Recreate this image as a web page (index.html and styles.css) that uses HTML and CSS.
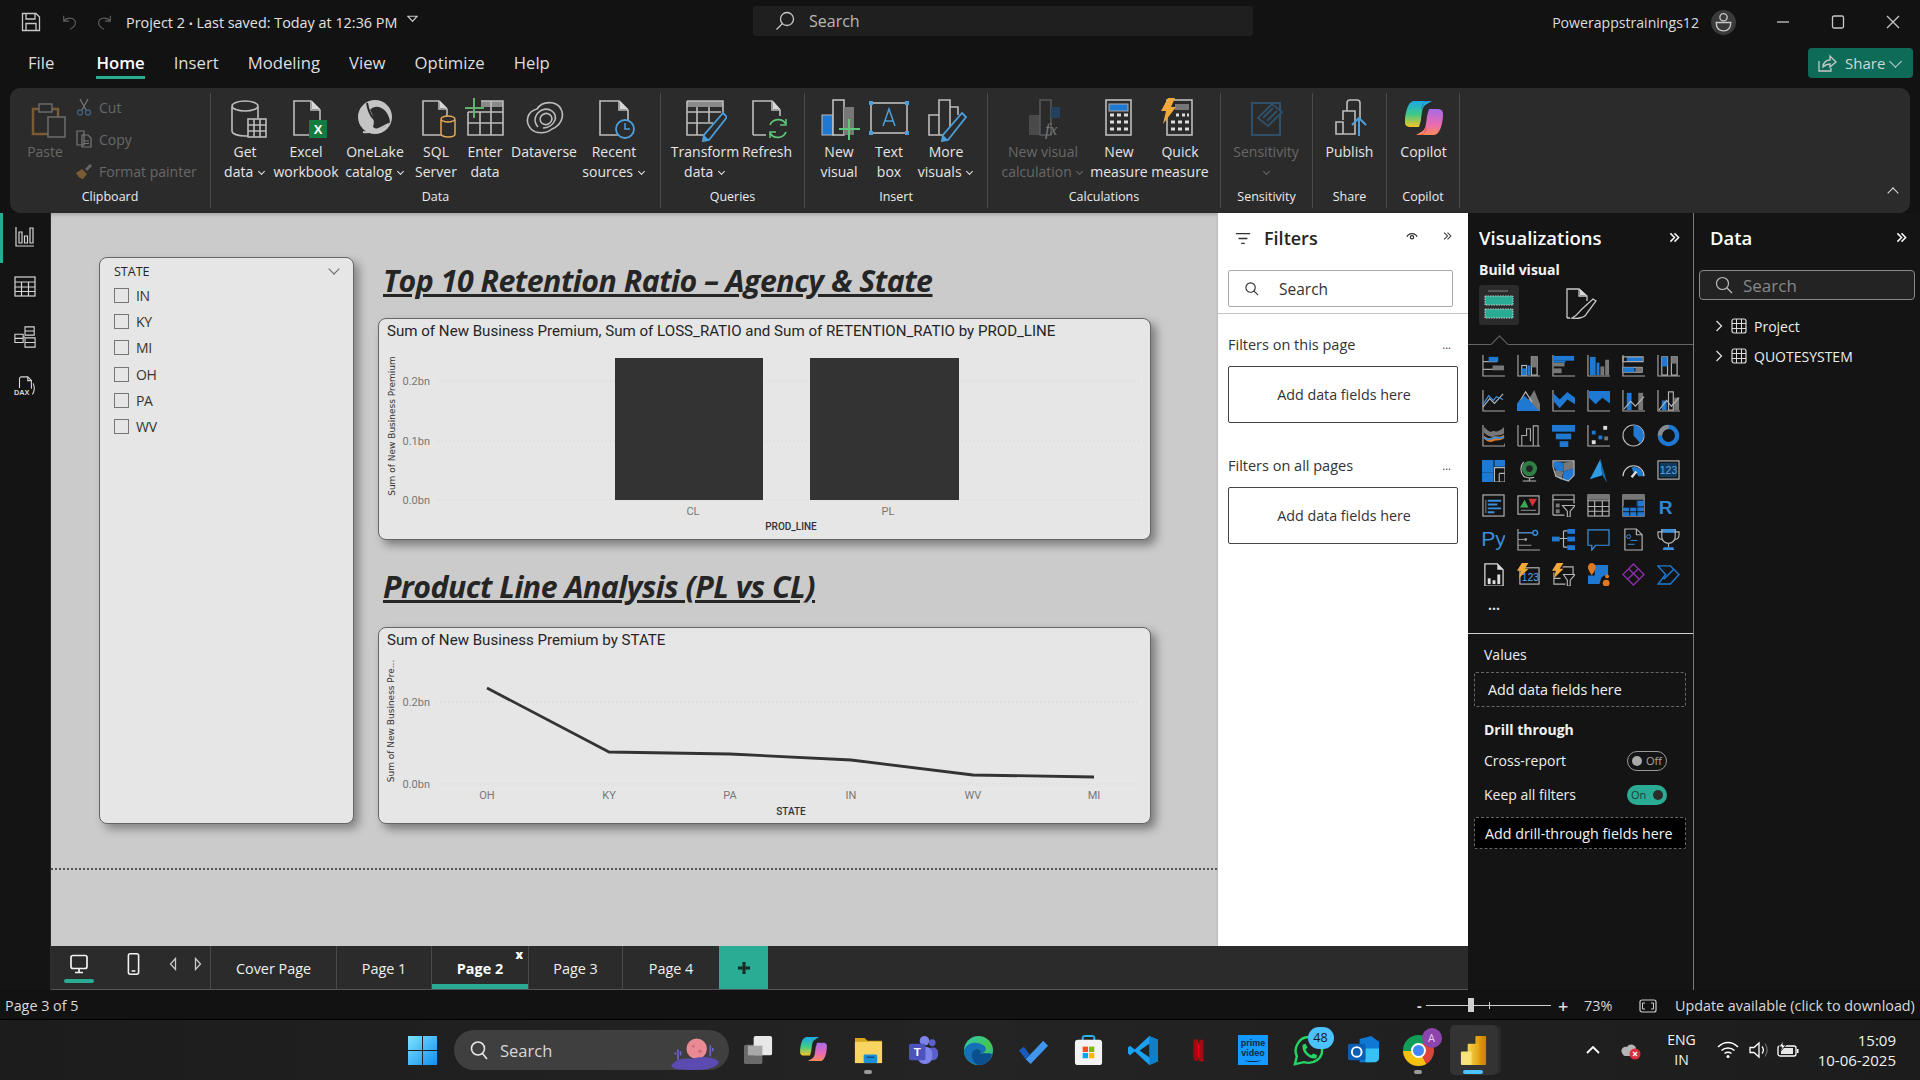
FILE: index.html
```html
<!DOCTYPE html>
<html lang="en">
<head>
<meta charset="utf-8">
<title>Project 2 - Power BI Desktop</title>
<link rel="stylesheet" href="styles.css">
</head>
<body>
<div class="app">

<header class="titlebar">
  <div class="tb-left">
    <svg class="tb-save" viewBox="0 0 20 20"><path class="st" d="M1.5 1.5H15L18.500 5V18.500H1.500ZM5 1.500V7H14V1.500M5 18.500V11.500H15V18.500"/></svg>
    <svg class="tb-undo" viewBox="0 0 20 20"><path class="sd" d="M3 3V9H9M3 9C7 4 16 5 16 11C16 14 13 17 10 18"/></svg>
    <svg class="tb-redo" viewBox="0 0 20 20"><path class="sd" d="M17 3V9H11M17 9C13 4 4 5 4 11C4 14 7 17 10 18"/></svg>
    <span class="tb-name">Project 2 <b class="tb-dot">•</b> Last saved: Today at 12:36 PM</span>
    <svg class="tb-tri" viewBox="0 0 12 8"><path class="st" d="M1 1H11L6 6.500Z"/></svg>
  </div>
  <div class="tb-search">
    <svg class="tb-search-ico" viewBox="0 0 20 20"><circle class="st" cx="12" cy="8" r="6.500"/><path class="st" d="M7.500 12.500L1.500 18.500"/></svg>
    <span>Search</span>
  </div>
  <div class="tb-right">
    <span class="tb-user">Powerappstrainings12</span>
    <span class="tb-avatar"><svg viewBox="0 0 24 24"><circle class="st" cx="12" cy="7" r="3.500"/><path class="st" d="M5 12H19C19 18 16 20 12 20C8 20 5 18 5 12Z"/></svg></span>
    <svg class="win-btn" viewBox="0 0 14 14"><path class="st" d="M1 7H13"/></svg>
    <svg class="win-btn" viewBox="0 0 14 14"><rect class="st" x="1.500" y="1" width="11" height="12" rx="1.500"/></svg>
    <svg class="win-btn" viewBox="0 0 14 14"><path class="st" d="M1 1L13 13M13 1L1 13"/></svg>
  </div>
</header>

<nav class="menubar">
  <span class="menu-item mi-file">File</span>
  <span class="menu-item is-active">Home</span>
  <span class="menu-item">Insert</span>
  <span class="menu-item">Modeling</span>
  <span class="menu-item">View</span>
  <span class="menu-item">Optimize</span>
  <span class="menu-item">Help</span>
  <span class="share-btn">
    <svg viewBox="0 0 20 20"><path class="st" d="M2 8V18H14V15M6 14C6 9 10 7 13 7V3L19 9L13 14V11C10 11 8 12 6 14Z"/></svg>
    <span>Share</span><i class="chev chev-lg"></i>
  </span>
</nav>

<section class="ribbon">
  <div class="rb-group g-clip">
    <div class="rb-items">
      <div class="rb-item w70 is-off">
        <svg class="ri" viewBox="0 0 44 44"><path d="M10 11H35V36H10Z" fill="none" stroke="#7a5b34" stroke-width="2.500"/><rect x="16" y="6" width="13" height="8" fill="#2b2b2b" stroke="#6a6a6a" stroke-width="1.500"/><rect x="25" y="19" width="17" height="20" fill="#2b2b2b" stroke="#6e6e6e" stroke-width="1.500"/></svg>
        <span>Paste</span>
      </div>
      <div class="rb-small">
        <div class="rs-row"><svg viewBox="0 0 18 18"><path d="M5 1L11 12M13 1L7 12" fill="none" stroke="#777" stroke-width="1.200"/><circle cx="5" cy="14.500" r="2.500" fill="none" stroke="#41617e" stroke-width="1.300"/><circle cx="13" cy="14.500" r="2.500" fill="none" stroke="#41617e" stroke-width="1.300"/></svg><span>Cut</span></div>
        <div class="rs-row"><svg viewBox="0 0 18 18"><path d="M2 1H9V15H2ZM7 5H13L16 8V17H7Z" fill="#2b2b2b" stroke="#777" stroke-width="1.200"/><path d="M9 11H14M9 13.500H14" stroke="#777"/></svg><span>Copy</span></div>
        <div class="rs-row"><svg viewBox="0 0 18 18"><path d="M10 7L15 2L17 4L12 9Z" fill="#666"/><path d="M7 7L12 12L8 17C5 17 2 13 1 11Z" fill="#7a5b34"/></svg><span>Format painter</span></div>
      </div>
    </div>
    <div class="rb-label">Clipboard</div>
  </div>

  <div class="rb-group g-data">
    <div class="rb-items">
      <div class="rb-item w62">
        <svg class="ri" viewBox="0 0 44 44"><path class="ig" d="M9 9V33C9 36 15 38 22 38C23 38 24 38 25 38M35 9V20"/><ellipse class="ig" cx="22" cy="8" rx="13" ry="5"/><rect class="ig bgf" x="25" y="21" width="18" height="18"/><path class="ig" d="M25 27H43M25 33H43M31 21V39M37 21V39"/></svg>
        <span>Get</span><span>data <i class="chev"></i></span>
      </div>
      <div class="rb-item w60">
        <svg class="ri" viewBox="0 0 44 44"><path class="ig" d="M10 3H27L36 12V37H10ZM27 3V12H36"/><path class="sf-n" d="M28 3V11H36Z"/><rect x="25" y="22" width="18" height="18" fill="#107c41"/><text class="xl" x="34" y="36">X</text></svg>
        <span>Excel</span><span>workbook</span>
      </div>
      <div class="rb-item w78">
        <svg class="ri" viewBox="0 0 44 44"><circle cx="22" cy="19" r="17" fill="#c4c4c4"/><path d="M14 5C16 16 20 26 36 26" fill="none" stroke="#2b2b2b" stroke-width="2"/><path d="M17 12C24 4 36 12 37 24C33 30 25 33 20 29C22 24 20 16 17 12Z" fill="#2b2b2b"/><path d="M10 34C20 36 30 28 36 26" fill="none" stroke="#c4c4c4" stroke-width="2"/></svg>
        <span>OneLake</span><span>catalog <i class="chev"></i></span>
      </div>
      <div class="rb-item w44">
        <svg class="ri" viewBox="0 0 44 44"><path class="ig" d="M9 3H25L33 11V37H9ZM25 3V11H33"/><path class="sf-n" d="M26 3V10H33Z"/><path d="M27 22V36C27 38 31 39 34 39C38 39 41 38 41 36V22" fill="#2b2b2b" stroke="#e3a857" stroke-width="1.500"/><ellipse cx="34" cy="21" rx="7" ry="3" fill="#2b2b2b" stroke="#e3a857" stroke-width="1.500"/></svg>
        <span>SQL</span><span>Server</span>
      </div>
      <div class="rb-item w54">
        <svg class="ri" viewBox="0 0 44 44"><rect x="18" y="3" width="22" height="6" fill="#8a8a8a"/><path class="ig" d="M5 14V37H40V3H18M5 25H40M5 14H40M17 14V37M28 3V37"/><path d="M11 0V20M2 10H21" stroke="#5fb36c" stroke-width="2"/></svg>
        <span>Enter</span><span>data</span>
      </div>
      <div class="rb-item w64">
        <svg class="ri" viewBox="0 0 44 44"><path class="ig" d="M9 31C2 23 6 13 15 11C20 3 34 2 39 11C43 19 38 28 30 31C24 36 14 36 9 31Z"/><path class="ig" d="M16 29C10 22 14 15 20 12C28 9 35 15 33 22C31 27 26 30 21 30"/><ellipse class="ig" cx="24" cy="21" rx="6" ry="5.500" transform="rotate(-25 24 21)"/></svg>
        <span>Dataverse</span>
      </div>
      <div class="rb-item w76">
        <svg class="ri" viewBox="0 0 44 44"><path class="ig" d="M8 3H27L36 12V37H8ZM27 3V12H36"/><path class="sf-n" d="M28 3V11H36Z"/><circle cx="33" cy="31" r="9" fill="#2b2b2b" stroke="#4b9fdc" stroke-width="1.800"/><path d="M33 25V31H38" fill="none" stroke="#4b9fdc" stroke-width="1.500"/></svg>
        <span>Recent</span><span>sources <i class="chev"></i></span>
      </div>
    </div>
    <div class="rb-label">Data</div>
  </div>

  <div class="rb-group g-query">
    <div class="rb-items">
      <div class="rb-item w80">
        <svg class="ri" viewBox="0 0 44 44"><rect x="4" y="3" width="36" height="6" fill="#8a8a8a"/><path class="ig" d="M4 3H40V20M4 3V37H24M4 14H38M4 25H30M14 9V37M26 9V24M4 37H22"/><path d="M40 15L44 19L26 42L20 43L21 37Z" fill="#2b2b2b" stroke="#4b9fdc" stroke-width="1.800"/><path d="M21 37L26 42L20 43Z" fill="#4b9fdc"/></svg>
        <span>Transform</span><span>data <i class="chev"></i></span>
      </div>
      <div class="rb-item w44">
        <svg class="ri" viewBox="0 0 44 44"><path class="ig" d="M8 37V3H27L35 12V18M27 3V12H35M8 37H21"/><path class="sf-n" d="M28 3V11H35Z"/><path d="M25 27A9 9 0 0 1 41 26M41 34A9 9 0 0 1 25 35" fill="none" stroke="#5fc77a" stroke-width="1.800"/><path d="M41 21V27H35M25 40V34H31" fill="none" stroke="#5fc77a" stroke-width="1.500"/></svg>
        <span>Refresh</span>
      </div>
    </div>
    <div class="rb-label">Queries</div>
  </div>

  <div class="rb-group g-insert">
    <div class="rb-items">
      <div class="rb-item w60">
        <svg class="ri" viewBox="0 0 44 44"><rect x="5" y="17" width="11" height="20" fill="#1f78d1" stroke="#bbb"/><rect x="16" y="2" width="11" height="35" fill="#2b2b2b" stroke="#c8c8c8" stroke-width="1.500"/><rect x="27" y="9" width="10" height="28" fill="#777"/><path d="M32 21V42M22 31H43" stroke="#5fc77a" stroke-width="2"/></svg>
        <span>New</span><span>visual</span>
      </div>
      <div class="rb-item w40">
        <svg class="ri" viewBox="0 0 44 44"><rect class="ig" x="4" y="5" width="36" height="30"/><rect class="cd" x="2" y="3" width="4" height="4"/><rect class="cd" x="38" y="3" width="4" height="4"/><rect class="cd" x="2" y="33" width="4" height="4"/><rect class="cd" x="38" y="33" width="4" height="4"/><path d="M16 28L22 11L28 28M18 23H26" fill="none" stroke="#4b9fdc" stroke-width="1.500"/></svg>
        <span>Text</span><span>box</span>
      </div>
      <div class="rb-item w74">
        <svg class="ri" viewBox="0 0 44 44"><path class="ig" d="M5 37V17H15V37ZM15 37V2H26V37M26 9H34V17M5 37H26"/><path d="M38 15L42 19L24 42L18 43L19 37Z" fill="#2b2b2b" stroke="#4b9fdc" stroke-width="1.800"/><path d="M19 37L24 42L18 43Z" fill="#4b9fdc"/></svg>
        <span>More</span><span>visuals <i class="chev"></i></span>
      </div>
    </div>
    <div class="rb-label">Insert</div>
  </div>

  <div class="rb-group g-calc">
    <div class="rb-items">
      <div class="rb-item w102 is-off">
        <svg class="ri" viewBox="0 0 44 44"><rect x="8" y="17" width="11" height="20" fill="#4a4a4a"/><rect x="19" y="2" width="11" height="35" fill="#2b2b2b" stroke="#5a5a5a" stroke-width="1.500"/><rect x="30" y="9" width="9" height="11" fill="#22415e"/><text class="fx" x="24" y="37">fx</text></svg>
        <span>New visual</span><span>calculation <i class="chev"></i></span>
      </div>
      <div class="rb-item w50">
        <svg class="ri" viewBox="0 0 44 44"><rect class="ig" x="9" y="2" width="25" height="35"/><rect x="12" y="6" width="19" height="7" fill="#1f78d1" stroke="#aaa"/><path d="M13 17H17M20 17H24M27 17H31M13 24H17M20 24H24M27 24H31M13 31H17M20 31H24M27 31H31" stroke="#ddd" stroke-width="3"/></svg>
        <span>New</span><span>measure</span>
      </div>
      <div class="rb-item w72">
        <svg class="ri" viewBox="0 0 44 44"><rect class="ig" x="9" y="2" width="25" height="35"/><rect x="17" y="6" width="14" height="6" fill="#777"/><path d="M18 17H21M24 17H27M29 17H31M13 24H17M20 24H24M27 24H31M13 31H17M20 31H24M27 31H31" stroke="#ddd" stroke-width="3"/><path d="M10 0H17L13 9H18L5 26L8 13H3Z" fill="#f2a93b"/></svg>
        <span>Quick</span><span>measure</span>
      </div>
    </div>
    <div class="rb-label">Calculations</div>
  </div>

  <div class="rb-group g-sens">
    <div class="rb-items">
      <div class="rb-item w90 is-off">
        <svg class="ri" viewBox="0 0 44 44"><path d="M8 5H36V37H8Z" fill="none" stroke="#2f5068" stroke-width="2"/><path d="M14 20L28 6L38 14L24 28Z" fill="#2b2b2b" stroke="#2f5068" stroke-width="2"/><path d="M19 20L29 10M23 23L33 13" stroke="#2f5068" stroke-width="2"/></svg>
        <span>Sensitivity</span><span><i class="chev"></i></span>
      </div>
    </div>
    <div class="rb-label">Sensitivity</div>
  </div>

  <div class="rb-group g-share">
    <div class="rb-items">
      <div class="rb-item w73">
        <svg class="ri" viewBox="0 0 44 44"><path class="ig" d="M8 36V24H15V36ZM15 22V13H27V36H8M19 13V5C19 3 20 2 22 2H29C31 2 32 3 32 5V22"/><path d="M31 38V20M24 27L31 20L38 27" fill="none" stroke="#4b9fdc" stroke-width="2"/></svg>
        <span>Publish</span>
      </div>
    </div>
    <div class="rb-label">Share</div>
  </div>

  <div class="rb-group g-copilot">
    <div class="rb-items">
      <div class="rb-item w73">
        <svg class="ri" viewBox="0 0 44 44"><defs><linearGradient id="cpA" x1="0" y1="0" x2="0" y2="1"><stop offset="0" stop-color="#1da8e8"/><stop offset=".5" stop-color="#3cc98a"/><stop offset="1" stop-color="#f5c526"/></linearGradient><linearGradient id="cpB" x1="0" y1="0" x2="0" y2="1"><stop offset="0" stop-color="#a86be8"/><stop offset=".6" stop-color="#ea6bb0"/><stop offset="1" stop-color="#f98a5a"/></linearGradient></defs><path d="M12 3H30L25 6C20 8 20 14 19 22L17 29H8C3 29 3 25 3 24C3 15 6 3 12 3Z" fill="url(#cpA)"/><path d="M28 3C22 3 20 6 19 12L23 3Z" fill="#1464c8"/><path d="M32 37H14L19 34C24 32 24 26 25 18L27 11H36C41 11 41 15 41 16C41 25 38 37 32 37Z" fill="url(#cpB)"/><path d="M16 37C22 37 24 34 25 28L21 37Z" fill="#d8452e"/></svg>
        <span>Copilot</span>
      </div>
    </div>
    <div class="rb-label">Copilot</div>
  </div>
  <i class="chev chev-up"></i>
</section>

<div class="workspace">
  <aside class="rail">
    <div class="rail-item is-current"><svg viewBox="0 0 20 22"><path class="sw" d="M1 1V20H19M4 6H7V17H4ZM9.500 10H12.500V17H9.500ZM15 2H18V17H15Z"/></svg></div>
    <div class="rail-item ri-table"><svg viewBox="0 0 22 22"><rect class="sw" x="1" y="2" width="20" height="19"/><path class="sw" d="M1 7H21M1 12H21M1 16.500H21M7.500 7V21M14.500 7V21"/></svg></div>
    <div class="rail-item"><svg viewBox="0 0 24 24"><path class="sw" d="M1 9H10V18H1ZM1 13.500H10M12 1H22V10H12ZM12 5.500H22M12 13H23V23H12ZM12 18H23M10 12H12"/></svg></div>
    <div class="rail-item"><svg viewBox="0 0 24 24"><path class="sw" d="M6 13V3C6 2 7 1 8 1H15L19 5V14M15 1V5H19M21 8C23 13 22 18 20 20"/><text class="dax" x="0" y="21">DAX</text></svg></div>
  </aside>

  <div class="center">
    <div class="stage">
      <main class="canvas">
        <div class="page">
          <div class="slicer">
            <div class="sl-head"><span>STATE</span><i class="chev sl-chev"></i></div>
            <label class="sl-item"><i class="cb"></i>IN</label>
            <label class="sl-item"><i class="cb"></i>KY</label>
            <label class="sl-item"><i class="cb"></i>MI</label>
            <label class="sl-item"><i class="cb"></i>OH</label>
            <label class="sl-item"><i class="cb"></i>PA</label>
            <label class="sl-item"><i class="cb"></i>WV</label>
          </div>
          <div class="visuals">
            <h2 class="vh vh-1">Top 10 Retention Ratio – Agency &amp; State</h2>
            <div class="visual v-bar">
              <svg viewBox="0 0 772 222" width="772" height="222">
                <text class="c-title" x="8" y="18">Sum of New Business Premium, Sum of LOSS_RATIO and Sum of RETENTION_RATIO by PROD_LINE</text>
                <text class="c-ytitle" transform="translate(16 108) rotate(-90)">Sum of New Business Premium</text>
                <path class="c-grid" d="M59 63H761M59 123H761M59 182H761"/>
                <text class="c-tick" x="51" y="67">0.2bn</text>
                <text class="c-tick" x="51" y="127">0.1bn</text>
                <text class="c-tick" x="51" y="186">0.0bn</text>
                <rect class="c-bar" x="236" y="40" width="148" height="142"/>
                <rect class="c-bar" x="431" y="40" width="149" height="142"/>
                <text class="c-cat" x="314" y="197">CL</text>
                <text class="c-cat" x="509" y="197">PL</text>
                <text class="c-xtitle" x="412" y="212">PROD_LINE</text>
              </svg>
            </div>
            <h2 class="vh vh-2">Product Line Analysis (PL vs CL)</h2>
            <div class="visual v-line">
              <svg viewBox="0 0 772 197" width="772" height="197">
                <text class="c-title" x="8" y="18">Sum of New Business Premium by STATE</text>
                <text class="c-ytitle" transform="translate(15 94) rotate(-90)">Sum of New Business Pre...</text>
                <path class="c-grid" d="M57 75H761M57 157H761"/>
                <text class="c-tick" x="51" y="79">0.2bn</text>
                <text class="c-tick" x="51" y="161">0.0bn</text>
                <polyline class="c-line" points="108,61 230,125 351,127 472,133 594,148 715,150"/>
                <text class="c-cat" x="108" y="172">OH</text>
                <text class="c-cat" x="230" y="172">KY</text>
                <text class="c-cat" x="351" y="172">PA</text>
                <text class="c-cat" x="472" y="172">IN</text>
                <text class="c-cat" x="594" y="172">WV</text>
                <text class="c-cat" x="715" y="172">MI</text>
                <text class="c-xtitle" x="412" y="188">STATE</text>
              </svg>
            </div>
          </div>
        </div>
      </main>

      <aside class="filters">
        <div class="f-head">
          <svg class="f-ico" viewBox="0 0 18 14"><path d="M1 1.500H17M4 7H14M7 12.500H11" fill="none" stroke="#333" stroke-width="1.500"/></svg>
          <span class="f-title">Filters</span>
          <svg class="f-eye" viewBox="0 0 14 12"><path d="M1 7C3 2 11 2 13 7" fill="none" stroke="#333" stroke-width="1.500"/><circle cx="7" cy="7.500" r="2" fill="none" stroke="#333" stroke-width="1.500"/></svg>
          <svg class="f-dbl" viewBox="0 0 12 12"><path d="M1.500 1.500L6 6L1.500 10.500M6 1.500L10.500 6L6 10.500" fill="none" stroke="#333" stroke-width="1.400"/></svg>
        </div>
        <div class="f-search">
          <svg viewBox="0 0 16 16"><circle cx="7" cy="7" r="5" fill="none" stroke="#333" stroke-width="1.200"/><path d="M10.500 10.500L15 15" stroke="#333" stroke-width="1.200"/></svg>
          <span>Search</span>
        </div>
        <div class="f-sec f-sec-1"><span>Filters on this page</span><b>...</b></div>
        <div class="f-well">Add data fields here</div>
        <div class="f-sec f-sec-2"><span>Filters on all pages</span><b>...</b></div>
        <div class="f-well">Add data fields here</div>
      </aside>
    </div>

    <div class="tabs">
      <div class="tab-tools">
        <span class="tt tt-desk"><svg viewBox="0 0 20 20"><rect class="sw2" x="2" y="1.500" width="16" height="13" rx="2"/><path class="sw2" d="M10 15V18M6 18.500H14"/></svg></span>
        <span class="tt tt-phone"><svg viewBox="0 0 14 24"><rect class="sw2" x="1.500" y="1" width="11" height="22" rx="2"/><path class="sw2" d="M5 19.500H9"/></svg></span>
        <span class="tt tt-arrow"><svg viewBox="0 0 8 14"><path class="st" d="M6.500 1.500L1.500 7L6.500 12.500Z"/></svg></span>
        <span class="tt tt-arrow"><svg viewBox="0 0 8 14"><path class="st" d="M1.500 1.500L6.500 7L1.500 12.500Z"/></svg></span>
      </div>
      <div class="tab tab-cover">Cover Page</div>
      <div class="tab tab-p1">Page 1</div>
      <div class="tab tab-p2 is-active">Page 2<b class="tab-x">x</b></div>
      <div class="tab tab-p3">Page 3</div>
      <div class="tab tab-p4">Page 4</div>
      <div class="tab-add"><svg viewBox="0 0 14 14"><path d="M7 1V13M1 7H13" stroke="#1b2b28" stroke-width="3"/></svg></div>
    </div>
  </div>

  <aside class="pane viz">
    <div class="pane-head"><span>Visualizations</span><svg class="dbl" viewBox="0 0 12 12"><path d="M1.500 1.500L6 6L1.500 10.500M6 1.500L10.500 6L6 10.500" fill="none" stroke="#fff" stroke-width="1.600"/></svg></div>
    <div class="build">Build visual</div>
    <div class="build-tabs">
      <span class="bt is-on"><svg viewBox="0 0 32 32"><path d="M5 2H25" stroke="#888"/><rect x="2" y="7" width="28" height="9" fill="#2aab93" stroke="#ccc" stroke-dasharray="1.500 1"/><rect x="2" y="20" width="28" height="9" fill="#2aab93" stroke="#ccc" stroke-dasharray="1.500 1"/></svg></span>
      <span class="bt bt-2"><svg viewBox="0 0 32 32"><path class="st" d="M2 30V1H14L22 8V13M14 1V8H22M2 30H5"/><path class="sf-n" d="M15 1V7H21Z"/><path class="st" d="M17 21L28 11L31 13L22 25C20 30 12 31 7 30C12 28 14 24 17 21Z"/></svg></span>
      <i class="bt-caret"></i>
    </div>
    <div class="viz-grid">
      <svg viewBox="0 0 24 24"><path class="ax" d="M1 1V23H24M1 8H16M1 16H16"/><rect class="vb" x="7" y="3" width="10" height="5"/><rect class="vg" x="11" y="12" width="12" height="5"/></svg>
      <svg viewBox="0 0 24 24"><path class="ax" d="M1 1V23H24"/><rect class="ol" x="5" y="12" width="5" height="10"/><rect class="vb" x="5" y="15" width="5" height="7"/><rect class="ol" x="15" y="3" width="6" height="19"/><rect class="vg" x="15" y="3" width="6" height="11"/><rect class="vb" x="11" y="12" width="3" height="10"/></svg>
      <svg viewBox="0 0 24 24"><path class="ax" d="M1 1V23H24"/><rect class="vb" x="1" y="2" width="22" height="5"/><rect class="vg" x="1" y="9" width="12" height="4"/><rect class="vb" x="1" y="7" width="13" height="2"/><rect class="vg" x="1" y="15" width="9" height="5"/></svg>
      <svg viewBox="0 0 24 24"><path class="ax" d="M1 1V23H24"/><rect class="vb" x="3" y="3" width="6" height="19"/><rect class="vb" x="10" y="9" width="3" height="13"/><rect class="vg" x="14" y="13" width="4" height="9"/><rect class="vg" x="19" y="6" width="4" height="16"/></svg>
      <svg viewBox="0 0 24 24"><path class="ax" d="M1 1V23H24"/><rect class="vb" x="5" y="3" width="16" height="5"/><rect class="ol" x="1" y="3" width="21" height="5"/><rect class="ol" x="1" y="14" width="20" height="5"/><rect class="vb" x="1" y="14" width="12" height="5"/><rect class="vg" x="14" y="14" width="7" height="5"/></svg>
      <svg viewBox="0 0 24 24"><path class="ax" d="M1 1V23H24"/><rect class="ol" x="5" y="3" width="6" height="19"/><rect class="vb" x="5" y="3" width="6" height="10"/><rect class="ol" x="15" y="3" width="6" height="19"/><rect class="vg" x="15" y="3" width="6" height="7"/></svg>

      <svg viewBox="0 0 24 24"><path class="ax" d="M1 1V23H24"/><path class="ol" d="M1 19L8 10L13 15L22 5"/><path class="lb" d="M1 16L7 7L12 12L15 8L22 11"/></svg>
      <svg viewBox="0 0 24 24"><path class="vg" d="M12 11L18 1L24 16V23H12Z"/><path class="ol" d="M1 16L9 3L16 14"/><path class="vb" d="M0 23V15L8 7L15 14L23 23Z"/></svg>
      <svg viewBox="0 0 24 24"><path class="ax" d="M1 1V23H24"/><path class="vb" d="M1 4L8 11L16 3L24 9V16L16 11L8 20L1 12Z"/></svg>
      <svg viewBox="0 0 24 24"><path class="ax" d="M1 1V23H24"/><path class="vb" d="M2 2H24V15L16 9L9 16L2 9Z"/></svg>
      <svg viewBox="0 0 24 24"><path class="ax" d="M1 1V23H24"/><rect class="vb" x="5" y="4" width="5" height="18"/><rect class="vg" x="17" y="4" width="5" height="18"/><path class="ol" d="M2 21L9 13L14 18L23 8"/></svg>
      <svg viewBox="0 0 24 24"><path class="ax" d="M1 1V23H24"/><rect class="vb" x="5" y="12" width="5" height="10"/><rect class="ol" x="12" y="3" width="5" height="19"/><rect class="vg" x="18" y="9" width="5" height="13"/><path class="ol" d="M2 22L10 12L15 18L23 9"/></svg>

      <svg viewBox="0 0 24 24"><path class="ax" d="M1 1V23H24V20"/><path d="M2 3C7 8 9 9 12 7C15 9 19 7 23 3V10C19 13 15 11 12 13C9 14 6 12 2 9Z" fill="#777"/><path d="M2 12C6 16 10 15 12 13C15 12 18 15 23 11V15C18 18 15 16 12 18C8 20 5 18 2 15Z" fill="#e2781e"/><path d="M2 14C7 19 11 14 14 14C17 14 20 16 23 13" fill="none" stroke="#3b8fdb" stroke-width="2"/></svg>
      <svg viewBox="0 0 24 24"><path class="ax" d="M1 23V1M1 23H24M5 23V12H10V5H14V18M17 23V2H22V23"/></svg>
      <svg viewBox="0 0 24 24"><rect class="vb" x="0" y="1" width="24" height="7"/><rect class="vb" x="4" y="10" width="16" height="6"/><rect class="vb" x="8" y="18" width="9" height="6"/></svg>
      <svg viewBox="0 0 24 24"><path class="ax" d="M1 1V23H24"/><rect class="vb" x="5" y="7" width="4" height="4"/><rect class="vb" x="12" y="12" width="4" height="4"/><rect class="vg" x="18" y="13" width="4" height="4"/><rect class="wh" x="17" y="2" width="4" height="4"/><rect class="wh" x="5" y="17" width="4" height="4"/></svg>
      <svg viewBox="0 0 24 24"><circle class="ol" cx="12" cy="12" r="11"/><path class="vb" d="M12 1A11 11 0 0 1 19 20L12 12Z"/></svg>
      <svg viewBox="0 0 24 24"><circle cx="12" cy="12" r="9" fill="none" stroke="#1f78d1" stroke-width="4.500"/><path d="M3 12A9 9 0 0 1 12 3" fill="none" stroke="#8a8a8a" stroke-width="4.500"/></svg>

      <svg viewBox="0 0 24 24"><rect class="vb" x="0" y="1" width="12" height="13"/><rect class="vb" x="0" y="14" width="12" height="10"/><rect class="vb" x="13" y="1" width="11" height="7"/><path class="ol" d="M13 9H24V24H13ZM18 15H24M18 15V24"/></svg>
      <svg viewBox="0 0 24 24"><circle cx="13" cy="10" r="8" fill="#2f7f45"/><circle cx="13" cy="10" r="3.500" fill="#222"/><path class="ol" d="M7 3A11 11 0 0 0 7 18C10 20 15 20 18 19M6 23H20M13 20V23"/></svg>
      <svg viewBox="0 0 24 24"><path class="vb" d="M1 2L12 4V13L5 13L2 8Z"/><path class="vg" d="M12 4L23 2V10L12 13ZM3 12L12 13L10 22L4 18Z"/><path class="vb" d="M12 13L23 10V17L17 23L11 22Z"/><path class="ol" d="M1 2L23 2V17L17 23L4 18L1 8Z"/></svg>
      <svg viewBox="0 0 24 24"><path d="M14 0L3 21L16 17Z" fill="#2f9be0"/><path d="M14 0L16 17L21 25Z" fill="#0e6fae"/></svg>
      <svg viewBox="0 0 24 24"><path d="M1 18A11 11 0 0 1 23 18" fill="none" stroke="#ccc" stroke-width="1.200"/><path d="M10 9A9 9 0 0 1 22 18H17A5 5 0 0 0 12 14Z" fill="#1f78d1"/><path d="M15 13L10 19" stroke="#ddd" stroke-width="2.500"/></svg>
      <svg viewBox="0 0 24 24"><rect class="ol" x="1" y="2" width="22" height="19"/><rect x="3" y="4" width="18" height="15" fill="#143a5a"/><text class="t123" x="12" y="16">123</text></svg>

      <svg viewBox="0 0 24 24"><rect class="ol" x="1" y="1" width="22" height="22"/><path d="M6 7H20M6 11H16M6 15H20M6 19H13" stroke="#3b8fdb" stroke-width="2"/><path d="M4 6V20" stroke="#888"/></svg>
      <svg viewBox="0 0 24 24"><rect class="ol" x="1" y="2" width="22" height="19"/><path d="M3 14L8 6L12 14Z" fill="#3aa856"/><path d="M12 5H21L16 13Z" fill="#d5333a"/><path d="M4 17H20" stroke="#999"/></svg>
      <svg viewBox="0 0 24 24"><path class="ol" d="M1 22V1H23V10M1 6H23M1 22H13"/><rect class="vg" x="4" y="10" width="4" height="4"/><rect class="vg" x="4" y="16" width="4" height="4"/><path class="ol" d="M11 12H24L19 18V24H16V18Z"/></svg>
      <svg viewBox="0 0 24 24"><rect class="ol" x="1" y="1" width="22" height="22"/><path class="ol" d="M1 7H23M1 13H23M1 18H23M8 7V23M16 7V23"/><rect class="vg" x="1" y="1" width="22" height="5"/></svg>
      <svg viewBox="0 0 24 24"><rect class="ol" x="1" y="1" width="22" height="22"/><rect class="vg" x="1" y="1" width="22" height="5"/><rect class="vb" x="15" y="7" width="8" height="16"/><rect class="vb" x="1" y="14" width="14" height="9"/><path d="M1 13.500H23M1 18.500H23M8 7V23M15.500 7V23" stroke="#141414"/></svg>
      <svg viewBox="0 0 24 24"><text class="t-r" x="9" y="21">R</text></svg>

      <svg viewBox="0 0 24 24"><text class="t-py" x="12" y="19">Py</text></svg>
      <svg viewBox="0 0 24 24"><path class="ax" d="M1 1V23H24"/><path d="M1 5H16M1 12H8M1 18H15" stroke="#999"/><circle cx="19" cy="5" r="2.500" fill="none" stroke="#3b8fdb" stroke-width="1.500"/><circle cx="9" cy="12" r="1.500" fill="#999"/><path d="M1 5H16" stroke="#3b8fdb"/></svg>
      <svg viewBox="0 0 24 24"><rect class="vb" x="0" y="9" width="8" height="5"/><rect class="vb" x="16" y="1" width="8" height="5"/><rect class="vb" x="16" y="9" width="8" height="5"/><rect class="vb" x="16" y="18" width="8" height="5"/><path class="ol" d="M8 11H12M12 3V20M12 3H16M12 11H16M12 20H16"/></svg>
      <svg viewBox="0 0 24 24"><path d="M1 2H23V18H9L5 23V18H1Z" fill="none" stroke="#3b8fdb" stroke-width="1.300"/></svg>
      <svg viewBox="0 0 24 24"><path class="ol" d="M3 23V1H15L21 7V23ZM15 1V7H21"/><circle cx="7" cy="9" r="2" fill="none" stroke="#3b8fdb"/><path d="M9 13H16M6 17H13" stroke="#3b8fdb"/></svg>
      <svg viewBox="0 0 24 24"><rect x="5" y="1" width="14" height="4" fill="#3b8fdb"/><path class="ol" d="M5 1V9C5 14 9 16 12 16C15 16 19 14 19 9V1M5 4H1V7C1 10 3 12 6 12M19 4H23V7C23 10 21 12 18 12M12 16V20"/><path d="M7 20H17L18 23H6Z" fill="#3b8fdb"/></svg>

      <svg viewBox="0 0 24 24"><path d="M3 1H16L22 7V24H3Z" fill="none" stroke="#ddd" stroke-width="1.300"/><path d="M16 1V7H22" fill="#ddd"/><rect class="wh" x="6" y="16" width="3" height="6"/><rect class="wh" x="11" y="18" width="3" height="4"/><rect class="wh" x="16" y="12" width="3" height="10"/></svg>
      <svg viewBox="0 0 24 24"><rect class="ol" x="3" y="5" width="20" height="17"/><text class="t123" x="14" y="19">123</text><path d="M5 0H12L8 6H12L2 16L4 8H0Z" fill="#f2a93b"/></svg>
      <svg viewBox="0 0 24 24"><path class="ol" d="M2 10V22H14M11 4H22V12M2 16H9"/><path class="ol" d="M12 12H24L19 18V24H16V18Z"/><path d="M5 0H12L8 6H12L2 16L4 8H0Z" fill="#f2a93b"/></svg>
      <svg viewBox="0 0 24 24"><path class="vb" d="M8 2H22V14L18 13L15 15L13 22H1V13H8Z"/><path d="M5 0C8 0 9 3 9 5C9 7 6 11 5 13C4 11 1 7 1 5C1 3 2 0 5 0Z" fill="#e2781e"/><circle cx="20" cy="21" r="3.500" fill="#e2781e"/><circle cx="21" cy="14" r="2" fill="#e2781e"/></svg>
      <svg viewBox="0 0 24 24"><path d="M12 1L23 12L12 23L1 12Z M7 6L18 17 M17 6L6 17" fill="none" stroke="#8a2ea8" stroke-width="1.500"/></svg>
      <svg viewBox="0 0 24 24"><path d="M1 3H14L23 12L14 22H1L9 12Z M7 17L17 7" fill="none" stroke="#1f78d1" stroke-width="1.500"/></svg>
    </div>
    <div class="viz-more">...</div>
    <div class="viz-fields">
      <div class="vf-label">Values</div>
      <div class="well">Add data fields here</div>
      <div class="vf-bold">Drill through</div>
      <div class="toggle-row"><span>Cross-report</span><span class="toggle is-off"><i></i><em>Off</em></span></div>
      <div class="toggle-row tr-2"><span>Keep all filters</span><span class="toggle is-on"><em>On</em><i></i></span></div>
      <div class="well well-dark">Add drill-through fields here</div>
    </div>
  </aside>

  <aside class="pane data">
    <div class="pane-head"><span>Data</span><svg class="dbl" viewBox="0 0 12 12"><path d="M1.500 1.500L6 6L1.500 10.500M6 1.500L10.500 6L6 10.500" fill="none" stroke="#fff" stroke-width="1.600"/></svg></div>
    <div class="d-search">
      <svg viewBox="0 0 18 18"><circle cx="7.500" cy="7.500" r="6" fill="none" stroke="#bbb" stroke-width="1.200"/><path d="M12 12L17 17" stroke="#bbb" stroke-width="1.200"/></svg>
      <span>Search</span>
    </div>
    <div class="d-row"><svg class="d-chev" viewBox="0 0 8 12"><path d="M1.500 1L6.500 6L1.500 11" fill="none" stroke="#ddd" stroke-width="1.300"/></svg><svg class="d-tbl" viewBox="0 0 16 16"><rect x="1" y="1" width="14" height="14" rx="2" fill="none" stroke="#ddd" stroke-width="1.200"/><path d="M1 5.500H15M1 10.500H15M5.500 1V15M10.500 1V15" stroke="#ddd"/></svg><span>Project</span></div>
    <div class="d-row"><svg class="d-chev" viewBox="0 0 8 12"><path d="M1.500 1L6.500 6L1.500 11" fill="none" stroke="#ddd" stroke-width="1.300"/></svg><svg class="d-tbl" viewBox="0 0 16 16"><rect x="1" y="1" width="14" height="14" rx="2" fill="none" stroke="#ddd" stroke-width="1.200"/><path d="M1 5.500H15M1 10.500H15M5.500 1V15M10.500 1V15" stroke="#ddd"/></svg><span>QUOTESYSTEM</span></div>
  </aside>
</div>

<footer class="status">
  <span class="st-page">Page 3 of 5</span>
  <div class="st-right">
    <span class="st-minus">-</span>
    <span class="slider"><i class="sl-thumb"></i><i class="sl-tick"></i></span>
    <span class="st-plus">+</span>
    <span class="st-zoom">73%</span>
    <svg class="st-fit" viewBox="0 0 18 14"><rect x="1" y="1" width="16" height="12" rx="2" fill="none" stroke="#ccc" stroke-width="1.200"/><path d="M6 4H3.500V10H6M12 4H14.500V10H12" fill="none" stroke="#ccc"/></svg>
    <span class="st-update">Update available (click to download)</span>
  </div>
</footer>

<div class="taskbar">
  <svg class="tk-win" viewBox="0 0 30 30"><defs><linearGradient id="win" x1="0" y1="0" x2="1" y2="1"><stop offset="0" stop-color="#7fe3ff"/><stop offset="1" stop-color="#0f8ef0"/></linearGradient></defs><path fill="url(#win)" d="M0 0H14.500V14.500H0ZM15.500 0H30V14.500H15.500ZM0 15.500H14.500V30H0ZM15.500 15.500H30V30H15.500Z"/></svg>
  <div class="tk-search">
    <svg viewBox="0 0 20 20"><circle cx="9" cy="8.500" r="6.500" fill="none" stroke="#e8e8e8" stroke-width="1.600"/><path d="M13.500 13.500L18 19" stroke="#e8e8e8" stroke-width="1.600"/></svg>
    <span>Search</span>
    <svg class="tk-moon" viewBox="0 0 60 40"><circle cx="32" cy="15" r="12" fill="#e98a94"/><circle cx="28" cy="12" r="1.500" fill="#c96a78"/><circle cx="36" cy="18" r="2" fill="#c96a78"/><path d="M2 36C6 26 20 26 26 27C36 23 52 24 58 30C58 36 46 40 30 40C14 40 6 40 2 36Z" fill="#5b4bb0"/><path d="M10 28V16M7 22V19M13 23V18M48 24V11M51 18V14" fill="none" stroke="#6c62c8" stroke-width="2"/></svg>
  </div>
  <div class="tk-apps">
    <span class="app-ico"><svg viewBox="0 0 32 32"><rect x="1" y="10" width="19" height="20" rx="2" fill="#6a6a6a"/><rect x="11" y="1" width="19" height="20" rx="2" fill="#e8e8e8"/><rect x="5" y="11" width="15" height="10" fill="#a8a8a8"/></svg></span>
    <span class="app-ico"><svg viewBox="0 0 44 44"><path d="M12 3H30L25 6C20 8 20 14 19 22L17 29H8C3 29 3 25 3 24C3 15 6 3 12 3Z" fill="url(#cpA)"/><path d="M32 37H14L19 34C24 32 24 26 25 18L27 11H36C41 11 41 15 41 16C41 25 38 37 32 37Z" fill="url(#cpB)"/></svg></span>
    <span class="app-ico is-run"><svg viewBox="0 0 32 32"><path d="M2 3H12L15 6H30V28H2Z" fill="#d9a520"/><rect x="2" y="7" width="28" height="22" fill="#f7d560"/><rect x="11" y="20" width="14" height="9" rx="1.500" fill="#1a8fd8"/><path d="M14 23H22" stroke="#0d4f8a" stroke-width="1.500"/></svg></span>
    <span class="app-ico"><svg viewBox="0 0 32 32"><circle cx="25" cy="8" r="3.500" fill="#5b5fc7"/><rect x="20" y="13" width="11" height="13" rx="5" fill="#5b5fc7"/><circle cx="17" cy="6" r="5" fill="#7b83eb"/><rect x="10" y="12" width="15" height="18" rx="7" fill="#7b83eb"/><rect x="1" y="9" width="17" height="17" rx="2" fill="#4b53bc"/><text class="t-teams" x="9.500" y="22">T</text></svg></span>
    <span class="app-ico"><svg viewBox="0 0 32 32"><defs><linearGradient id="edge" x1="0" y1="0" x2="1" y2="1"><stop offset="0" stop-color="#2cc7b5"/><stop offset=".6" stop-color="#47c74f"/><stop offset="1" stop-color="#1b9de2"/></linearGradient></defs><circle cx="16" cy="16" r="15" fill="url(#edge)"/><path d="M1 16C4 7 15 6 22 11C26 15 22 19 18 19C20 16 16 13 12 15C7 18 10 28 19 31C10 32 1 26 1 16Z" fill="#1570b8"/><path d="M12 15C16 13 20 16 18 19C22 19 28 18 30 20C28 28 20 33 14 30C9 27 7 18 12 15Z" fill="#0b4f8f"/></svg></span>
    <span class="app-ico"><svg viewBox="0 0 32 32"><path d="M1 16L6 12L12 20L8 25Z" fill="#185abd"/><path d="M8 25L26 6L31 11L13 30Z" fill="#3f96ec"/></svg></span>
    <span class="app-ico"><svg viewBox="0 0 32 32"><path d="M10 7V3C10 1 11 1 13 1H19C21 1 22 1 22 3V7" fill="none" stroke="#29b6f2" stroke-width="2"/><rect x="2" y="5" width="28" height="26" rx="3" fill="#f3f3f3"/><rect x="10" y="12" width="5.500" height="5.500" fill="#f25022"/><rect x="16.500" y="12" width="5.500" height="5.500" fill="#7fba00"/><rect x="10" y="18.500" width="5.500" height="5.500" fill="#00a4ef"/><rect x="16.500" y="18.500" width="5.500" height="5.500" fill="#ffb900"/></svg></span>
    <span class="app-ico"><svg viewBox="0 0 32 32"><path d="M22 1L31 5V27L22 31L7 17L2 21L0 19V13L2 11L7 15Z" fill="#1ba1f1"/><path d="M22 1V31L31 27V5Z" fill="#0f7fc7"/><path d="M22 9L12 16L22 23Z" fill="#232323"/></svg></span>
    <span class="app-ico"><svg class="nf" viewBox="0 0 32 32"><path d="M9 1H15L23 31H17Z" fill="#e50914"/><path d="M9 1H15V31L9 29Z" fill="#a5080f"/><path d="M17 1H23V29L17 31Z" fill="#a5080f"/></svg></span>
    <span class="app-ico"><span class="prime"><b>prime</b><b>video</b><i></i></span></span>
    <span class="app-ico has-badge"><svg viewBox="0 0 32 32"><path d="M2 30L4 22C0 14 6 2 16 2C25 2 30 9 30 16C30 24 22 31 11 28Z" fill="none" stroke="#25d366" stroke-width="2.500"/><path d="M10 10L13 9L15 13L13 15C14 18 17 20 19 21L21 19L25 21L24 24C18 26 8 18 10 10Z" fill="#25d366"/></svg><b class="badge">48</b></span>
    <span class="app-ico"><svg viewBox="0 0 32 32"><path d="M12 4L24 1L32 7V24L24 28H12Z" fill="#0f78d4"/><path d="M18 14H32V24C32 26 30 28 28 28H18Z" fill="#38c1f5"/><rect x="0" y="9" width="18" height="17" rx="2" fill="#0a5fb4"/><circle cx="9" cy="17.500" r="5" fill="none" stroke="#fff" stroke-width="2"/></svg></span>
    <span class="app-ico is-run has-pbadge"><span class="chrome"><i></i></span><b class="pbadge">A</b></span>
    <span class="app-ico is-pbi"><svg viewBox="0 0 32 32"><defs><linearGradient id="pb1" x1="0" y1="0" x2="1" y2="0"><stop offset="0" stop-color="#e6ad10"/><stop offset="1" stop-color="#c87f08"/></linearGradient><linearGradient id="pb2" x1="0" y1="0" x2="1" y2="0"><stop offset="0" stop-color="#f5d34f"/><stop offset="1" stop-color="#e3a512"/></linearGradient></defs><rect x="18" y="1" width="11" height="30" rx="1" fill="url(#pb1)"/><rect x="10" y="9" width="12" height="22" rx="1" fill="url(#pb2)"/><rect x="3" y="17" width="11" height="14" rx="1" fill="#f9e27a"/></svg></span>
  </div>
  <div class="tray">
    <svg class="tr-up" viewBox="0 0 14 8"><path d="M1 7L7 1L13 7" fill="none" stroke="#fff" stroke-width="1.800"/></svg>
    <svg class="tr-cloud" viewBox="0 0 22 20"><path d="M2 13C0 9 4 6 7 7C9 3 15 4 16 8L13 16H5C4 16 3 15 2 13Z" fill="#b5b5b5"/><circle cx="15" cy="14" r="5.500" fill="#d8303c"/><path d="M13 12L17 16M17 12L13 16" stroke="#fff" stroke-width="1.300"/></svg>
    <span class="tr-lang">ENG<br>IN</span>
    <svg class="tr-wifi" viewBox="0 0 22 18"><path d="M1 6C7 0 15 0 21 6M4.500 9.500C8 6 14 6 17.500 9.500M7.500 12.500C9.500 11 12.500 11 14.500 12.500" fill="none" stroke="#fff" stroke-width="1.500"/><circle cx="11" cy="15.500" r="1.500" fill="#fff"/></svg>
    <svg class="tr-vol" viewBox="0 0 20 18"><path d="M1 6.500H5L10 2V16L5 11.500H1Z" fill="none" stroke="#fff" stroke-width="1.300"/><path d="M13 5.500C15 8 15 10 13 12.500" fill="none" stroke="#fff" stroke-width="1.300"/><path d="M16 2.500C19 7 19 11 16 15.500" fill="none" stroke="#666" stroke-width="1.300"/></svg>
    <svg class="tr-bat" viewBox="0 0 22 18"><rect x="1" y="5" width="18" height="10" rx="2" fill="none" stroke="#fff" stroke-width="1.300"/><path d="M4 7H16V13H4Z" fill="#fff" opacity=".9"/><path d="M6 0L2 6H5L3 11L9 4H6Z" fill="#fff" stroke="#232323"/><rect x="20" y="8" width="1.500" height="4" fill="#fff"/></svg>
    <span class="tr-time">15:09<br>10-06-2025</span>
  </div>
</div>

</div>
</body>
</html>
```
FILE: styles.css
```css
* { box-sizing: border-box; }
html, body { margin: 0; padding: 0; }
body { width: 1920px; height: 1080px; overflow: hidden; background: #121212; color: #e8e8e8; font-family: "Open Sans", "Noto Sans", sans-serif; font-size: 14px; }
svg { display: block; flex: none; }
i, em { font-style: normal; }
.st { fill: none; stroke: #c8c8c8; stroke-width: 1.300; }
.sd { fill: none; stroke: #5e5e5e; stroke-width: 1.300; }
.sw { fill: none; stroke: #d6d6d6; stroke-width: 1.200; }
.sw2 { fill: none; stroke: #f2f2f2; stroke-width: 1.700; }
.ig { fill: none; stroke: #bdbdbd; stroke-width: 1.600; }
.bgf { fill: #2b2b2b; }
.sf-n { fill: #d8d8d8; }
.cd { fill: #4b9fdc; }
.xl { font: 700 13px "Liberation Sans", sans-serif; fill: #fff; text-anchor: middle; }
.fx { font: italic 17px "Liberation Serif", serif; fill: #777; }
.dax { font: 700 8px "Liberation Sans", sans-serif; fill: #d6d6d6; }
.app { display: flex; flex-direction: column; width: 1920px; height: 1080px; }

/* title bar */
.titlebar { display: flex; align-items: center; height: 44px; flex: none; }
.tb-left { display: flex; align-items: center; width: 753px; padding-left: 21px; }
.tb-save { width: 20px; height: 20px; }
.tb-undo { width: 18px; height: 18px; margin-left: 20px; }
.tb-redo { width: 18px; height: 18px; margin-left: 16px; }
.tb-name { margin-left: 13px; font-size: 14.400px; white-space: nowrap; color: #e2e2e2; }
.tb-dot { font-size: 11px; font-weight: 400; }
.tb-tri { width: 11px; height: 8px; margin-left: 10px; margin-top: -6px; }
.tb-search { display: flex; align-items: center; width: 500px; height: 30px; margin-top: -2px; background: #1f1f1f; border-radius: 3px; padding-left: 22px; color: #b9b9b9; font-size: 16px; }
.tb-search-ico { width: 20px; height: 20px; margin-right: 14px; }
.tb-right { display: flex; align-items: center; margin-left: auto; padding-right: 20px; }
.tb-user { font-size: 14.100px; color: #dcdcdc; white-space: nowrap; }
.tb-avatar { width: 25px; height: 25px; border-radius: 50%; background: #3a3a3a; margin: 0 0 0 12px; }
.win-btn { width: 14px; height: 14px; margin-left: 41px; }
.tb-avatar + .win-btn { margin-left: 40px; }

/* menu */
.menubar { display: flex; align-items: flex-start; height: 44px; flex: none; padding-left: 28px; gap: 29px; font-size: 16.700px; color: #dedede; }
.menu-item { height: 35px; line-height: 37px; white-space: nowrap; }
.mi-file { margin-right: 13px; }
.menu-item.is-active { color: #fff; font-weight: 600; border-bottom: 3px solid #2aab93; }
.share-btn { display: flex; align-items: center; width: 105px; height: 30px; margin: 4px 0 0 auto; margin-right: 7px; padding-left: 9px; background: #0e6b58; border-radius: 4px; font-size: 15px; color: #cfd9d6; }
.share-btn svg { width: 20px; height: 20px; margin-right: 8px; }

/* chevrons */
.chev { display: inline-block; width: 5px; height: 5px; border-right: 1.200px solid currentColor; border-bottom: 1.200px solid currentColor; transform: rotate(45deg); margin: 0 2px 3px 2px; }
.chev-lg { width: 9px; height: 9px; margin: 0 0 4px 6px; }
.chev-up { width: 8px; height: 8px; margin: 0 13px 11px auto; align-self: flex-end; transform: rotate(-135deg); color: #ddd; border-width: 1.800px; }

/* ribbon */
.ribbon { display: flex; width: 1900px; height: 125px; flex: none; margin-left: 10px; padding: 5px 0; background: #2b2b2b; border-radius: 10px; font-size: 14px; }
.rb-group { display: flex; flex-direction: column; height: 115px; border-right: 1px solid #4a4a4a; }
.rb-items { display: flex; height: 94px; flex: none; padding-top: 5px; }
.rb-label { height: 20px; line-height: 20px; text-align: center; font-size: 12.500px; color: #ececec; }
.rb-item { display: flex; flex-direction: column; align-items: center; flex: none; line-height: 20px; white-space: nowrap; color: #e6e6e6; }
.rb-item.is-off { color: #686868; }
.ri { width: 44px; height: 44px; margin-bottom: 0; }
.g-clip { width: 201px; }
.g-data { width: 450px; }
.g-data .rb-items { padding-left: 3px; }
.g-query { width: 144px; }
.g-query .rb-items { padding-left: 4px; }
.g-insert { width: 183px; }
.g-insert .rb-items { padding-left: 4px; }
.g-calc { width: 233px; }
.g-calc .rb-items { padding-left: 4px; }
.g-sens { width: 92px; }
.g-share { width: 74px; }
.g-copilot { width: 73px; }
.w40 { width: 40px; } .w44 { width: 44px; } .w50 { width: 50px; } .w54 { width: 54px; } .w60 { width: 60px; } .w62 { width: 62px; } .w64 { width: 64px; }
.w70 { width: 70px; } .w72 { width: 72px; } .w73 { width: 73px; } .w74 { width: 74px; } .w76 { width: 76px; } .w78 { width: 78px; } .w80 { width: 80px; } .w90 { width: 90px; } .w102 { width: 102px; }
.rb-small { display: flex; flex-direction: column; margin-top: -7px; margin-left: -5px; color: #686868; }
.rs-row { display: flex; align-items: center; height: 32.500px; gap: 6px; white-space: nowrap; }
.rs-row svg { width: 18px; height: 18px; }

/* workspace */
.workspace { display: flex; height: 777px; flex: none; }
.rail { width: 51px; flex: none; background: #141414; border-right: 1px solid #2e2e2e; }
.rail-item { display: flex; align-items: center; justify-content: center; height: 50px; padding-top: 0; }
.rail-item svg { width: 22px; height: 22px; margin-top: -2px; }
.ri-table svg { margin-top: -5px; }
.rail-item.is-current { box-shadow: inset 3px 0 0 #2aab93; }
.center { display: flex; flex-direction: column; width: 1417px; flex: none; }
.stage { display: flex; height: 733px; flex: none; }
.canvas { width: 1167px; flex: none; background: #cbcbcb; border-right: 1px solid #bdbdbd; box-shadow: inset 0 4px 4px -3px rgba(0,0,0,.25); }
.page { display: flex; height: 657px; padding: 44px 0 0 48px; border-bottom: 2px dotted #555; gap: 24px; }
.slicer { width: 255px; height: 567px; background: #e6e6e6; border: 1px solid #666; border-radius: 8px; box-shadow: 5px 5px 10px rgba(0,0,0,.35); color: #222; padding: 0 14px; }
.sl-head { display: flex; justify-content: space-between; align-items: center; height: 24px; padding-top: 3px; font-size: 12.500px; color: #252525; }
.sl-chev { width: 8px; height: 8px; color: #666; margin: -5px 1px 0 0; }
.sl-item { display: flex; align-items: center; gap: 7px; height: 26.300px; font-size: 14px; color: #333; letter-spacing: -.3px; }
.cb { display: block; width: 15px; height: 15px; border: 1px solid #777; }
.visuals { display: flex; flex-direction: column; width: 773px; }
.vh { margin: 0; padding-left: 5px; font-family: "Open Sans", sans-serif; font-weight: 700; font-style: italic; font-size: 30.300px; letter-spacing: -.5px; color: #252525; text-decoration: underline; white-space: nowrap; }
.vh-1 { height: 61px; line-height: 47px; }
.vh-2 { height: 87px; line-height: 93px; }
.visual { background: #e6e6e6; border: 1px solid #666; border-radius: 8px; box-shadow: 5px 5px 10px rgba(0,0,0,.4); overflow: hidden; }
.visual svg { margin: -1px 0 0 0; }
.v-bar { height: 222px; }
.v-line { height: 197px; }
.c-title { font: 15.100px Roboto, sans-serif; fill: #252525; }
.c-ytitle { font: 9px "DejaVu Sans", sans-serif; fill: #333; text-anchor: middle; }
.c-tick { font: 11px Roboto, sans-serif; fill: #777; text-anchor: end; }
.c-cat { font: 11px Roboto, sans-serif; fill: #777; text-anchor: middle; }
.c-xtitle { font: 500 10px Roboto, sans-serif; fill: #333; text-anchor: middle; }
.c-grid { fill: none; stroke: #cfcfcf; stroke-width: 1; stroke-dasharray: 1 3; }
.c-bar { fill: #333; }
.c-line { fill: none; stroke: #333; stroke-width: 2.800; stroke-linejoin: round; }

/* filters */
.filters { width: 250px; flex: none; background: #fff; color: #2b2b2b; padding: 0 10px; background-image: linear-gradient(#c4c4c4, #c4c4c4); background-size: 100% 1px; background-position: 0 100px; background-repeat: no-repeat; }
.f-head { display: flex; align-items: center; height: 50px; }
.f-ico { width: 16px; height: 13px; margin-left: 7px; }
.f-title { margin-left: 13px; font-size: 18px; font-weight: 600; color: #252525; }
.f-eye { width: 12px; height: 10px; margin: -5px 0 0 auto; }
.f-dbl { width: 9px; height: 10px; margin: -5px 6px 0 25px; }
.f-search { display: flex; align-items: center; width: 225px; height: 37px; margin-top: 7px; margin-bottom: 6px; border: 1px solid #aaa; border-radius: 2px; padding-left: 15px; font-size: 15.500px; color: #333; }
.f-search svg { width: 15px; height: 15px; margin-right: 20px; }
.f-sec { display: flex; justify-content: space-between; align-items: center; width: 230px; height: 20px; font-size: 14.500px; color: #333; padding-right: 7px; }
.f-sec b { font-weight: 400; font-size: 11px; }
.f-sec-1 { margin-top: 27px; margin-bottom: 12px; }
.f-sec-2 { margin-top: 32px; margin-bottom: 12px; }
.f-well { display: flex; align-items: center; justify-content: center; width: 230px; height: 57px; border: 1px solid #444; border-radius: 2px; font-size: 14.300px; color: #333; padding-left: 2px; }

/* tabs */
.tabs { display: flex; height: 44px; background: #2b2b2b; flex: none; border-bottom: 1px solid #555; }
.tab-tools { display: flex; width: 160px; flex: none; border-right: 1px solid #4a4a4a; }
.tt { display: flex; align-items: center; justify-content: center; height: 36px; flex: none; }
.tt-desk { width: 55px; position: relative; }
.tt-desk svg { width: 20px; height: 20px; }
.tt-desk::after { content: ""; position: absolute; left: 13px; bottom: -1px; width: 30px; height: 4px; border-radius: 2px; background: #2aab93; }
.tt-phone { width: 55px; }
.tt-phone svg { width: 13px; height: 24px; }
.tt-arrow { width: 24.500px; }
.tt-arrow svg { width: 8px; height: 14px; }
.tab { display: flex; align-items: center; justify-content: center; height: 43px; border-right: 1px solid #4a4a4a; font-size: 14.400px; color: #f0f0f0; position: relative; flex: none; padding-top: 1px; }
.tab-cover { width: 126px; }
.tab-p1 { width: 95px; }
.tab-p2 { width: 97px; font-weight: 700; color: #fff; box-shadow: inset 0 -5px 0 #2aab93; }
.tab-p3 { width: 94px; }
.tab-p4 { width: 96px; border-right: 0; }
.tab-x { position: absolute; right: 5px; top: 2px; font-size: 12px; line-height: 14px; }
.tab-add { display: flex; align-items: center; justify-content: center; width: 49px; height: 43px; background: #2aab93; }
.tab-add svg { width: 14px; height: 14px; }

/* panes */
.pane { flex: none; background: #141414; }
.viz { width: 226px; border-right: 1px solid #7a7a7a; }
.data { width: 226px; padding-left: 5px; }
.pane-head { display: flex; justify-content: space-between; align-items: center; height: 48px; padding: 0 13px 0 11px; font-size: 18.500px; font-weight: 600; color: #fff; }
.dbl { width: 11px; height: 11px; margin-top: 1px; }
.viz .pane-head { padding-right: 13px; }
.build { margin: -1px 0 0 11px; height: 20px; line-height: 20px; font-size: 14px; font-weight: 700; color: #f4f4f4; }
.build-tabs { display: flex; position: relative; height: 60px; margin-top: 5px; border-bottom: 1px solid #666; padding-left: 11px; }
.bt { display: flex; align-items: center; justify-content: center; width: 40px; height: 40px; border-radius: 3px; }
.bt svg { width: 32px; height: 32px; }
.bt.is-on { background: #2b2b2b; }
.bt-2 { margin-left: 42px; margin-top: -1px; }
.bt-caret { position: absolute; left: 25px; bottom: -7px; width: 13px; height: 13px; background: #141414; border-left: 1px solid #666; border-top: 1px solid #666; transform: rotate(45deg); }
.viz-grid { display: grid; grid-template-columns: repeat(6, 23px); grid-auto-rows: 23px; column-gap: 12px; row-gap: 11.900px; padding: 9px 0 0 14px; }
.viz-grid svg { width: 23px; height: 23px; }
.ax { fill: none; stroke: #a8a8a8; stroke-width: 1.200; }
.ol { fill: none; stroke: #b5b5b5; stroke-width: 1.200; }
.lb { fill: none; stroke: #3b8fdb; stroke-width: 1.300; }
.vb { fill: #1f78d1; }
.vg { fill: #777; }
.wh { fill: #e0e0e0; }
.t123 { font: 11px "Liberation Sans", sans-serif; fill: #5aa7e6; text-anchor: middle; }
.t-r { font: 700 20px "Liberation Sans", sans-serif; fill: #2f86cf; text-anchor: middle; }
.t-py { font: 22px "Liberation Sans", sans-serif; fill: #3b8fdb; text-anchor: middle; }
.t-teams { font: 700 12px "Liberation Sans", sans-serif; fill: #fff; text-anchor: middle; }
.viz-more { height: 35px; line-height: 14px; margin-top: 12px; padding-left: 20px; font-size: 14px; font-weight: 700; color: #ddd; }
.viz-fields { border-top: 1px solid #cfcfcf; padding: 0 7px 0 6px; }
.vf-label { height: 20px; line-height: 20px; margin: 11px 0 7px 10px; font-size: 14px; color: #eee; }
.well { display: flex; align-items: center; height: 35px; border: 1px dashed #666; border-radius: 2px; padding-left: 13px; font-size: 14.300px; color: #f2f2f2; white-space: nowrap; }
.vf-bold { height: 20px; line-height: 20px; margin: 13px 0 0 10px; font-size: 14px; font-weight: 700; color: #f2f2f2; }
.toggle-row { display: flex; justify-content: space-between; align-items: center; height: 21px; margin: 10px 19px 0 10px; font-size: 14px; color: #eee; }
.tr-2 { margin-top: 13px; }
.toggle { display: flex; align-items: center; justify-content: space-between; width: 40px; height: 20px; border-radius: 10px; padding: 0 4px; font-size: 11px; }
.toggle i { width: 10px; height: 10px; border-radius: 50%; }
.toggle.is-off { border: 1px solid #999; color: #aaa; }
.toggle.is-off i { background: #aaa; }
.toggle.is-on { background: #2aab93; color: #1f3f39; }
.toggle.is-on i { background: #2b2b2b; }
.well-dark { height: 32px; margin-top: 12px; background: #000; padding-left: 10px; }
.d-search { display: flex; align-items: center; width: 216px; height: 30px; margin-top: 9px; margin-bottom: 11px; background: #232323; border: 1px solid #8a8a8a; border-radius: 4px; padding-left: 15px; font-size: 17px; color: #888; }
.d-search svg { width: 18px; height: 18px; margin-right: 10px; }
.d-row { display: flex; align-items: center; height: 30px; padding-left: 16px; font-size: 14px; color: #ededed; white-space: nowrap; }
.d-chev { width: 8px; height: 12px; margin-right: 8px; }
.d-tbl { width: 16px; height: 16px; margin-right: 7px; }

/* status */
.status { display: flex; align-items: center; justify-content: space-between; height: 30px; flex: none; background: #121212; border-bottom: 1px solid #000; padding: 2px 0 0 5px; font-size: 14.350px; color: #d9d9d9; }
.st-right { display: flex; align-items: center; }
.st-minus { width: 9px; font-weight: 700; }
.slider { display: block; position: relative; width: 125px; height: 1px; background: #cfcfcf; margin: 0 7px 0 0; }
.sl-thumb { position: absolute; left: 42px; top: -7px; width: 6px; height: 14px; background: #cfcfcf; }
.sl-tick { position: absolute; left: 63px; top: -3px; width: 1px; height: 7px; background: #cfcfcf; }
.st-plus { width: 13px; font-size: 18px; line-height: 18px; font-weight: 600; }
.st-zoom { margin-left: 13px; width: 55px; }
.st-fit { width: 18px; height: 14px; margin-right: 18px; }
.st-update { width: 245px; white-space: nowrap; }

/* taskbar */
.taskbar { display: flex; align-items: center; height: 60px; flex: none; padding-left: 408px; background: linear-gradient(90deg, #1c1c1c, #242424 50%, #1c1c1c); }
.tk-win { width: 29px; height: 29px; }
.tk-search { display: flex; align-items: center; position: relative; width: 275px; height: 40px; margin-left: 17px; padding-left: 15px; background: #3f3f3f; border-radius: 20px; font-size: 16.500px; color: #d8d8d8; }
.tk-search svg { width: 20px; height: 20px; margin-right: 11px; }
.tk-search .tk-moon { position: absolute; right: 4px; top: 6px; width: 60px; height: 34px; margin: 0; }
.tk-apps { display: flex; align-items: center; margin-left: 1.500px; }
.app-ico { display: flex; align-items: center; justify-content: center; position: relative; width: 55px; height: 50px; flex: none; }
.app-ico svg { width: 31px; height: 31px; }
.app-ico .nf { width: 23px; height: 23px; }
.is-run::after { content: ""; position: absolute; bottom: 1px; left: 23.500px; width: 8px; height: 4px; border-radius: 2px; background: #9a9a9a; }
.is-pbi::before { content: ""; position: absolute; left: 4px; top: 0; width: 48px; height: 50px; background: #333; border-radius: 5px; box-shadow: 4px 0 0 -1px #2a2a2a; }
.is-pbi svg { position: relative; }
.is-pbi::after { content: ""; position: absolute; bottom: 1px; left: 17.500px; width: 20px; height: 4px; border-radius: 2px; background: #4cc2ff; }
.prime { display: flex; flex-direction: column; align-items: center; justify-content: center; width: 30px; height: 30px; background: #1399ff; color: #12283b; font: 700 9px/10px "Liberation Sans", sans-serif; }
.prime b { display: block; }
.prime i { display: block; width: 16px; height: 4px; border-bottom: 1.500px solid #12283b; border-radius: 0 0 50% 50%; }
.badge { position: absolute; right: 2px; top: 2px; width: 26px; height: 22px; border-radius: 11px; background: #4cc2ff; color: #1a1a1a; font-size: 12.500px; font-weight: 400; line-height: 22px; text-align: center; }
.chrome { display: block; position: relative; width: 31px; height: 31px; border-radius: 50%; background: conic-gradient(from 30deg, #db4437 0 120deg, #f4c20d 120deg 240deg, #0f9d58 240deg 360deg); }
.chrome i { position: absolute; left: 8px; top: 8px; width: 15px; height: 15px; border-radius: 50%; background: #4285f4; border: 2px solid #fff; }
.pbadge { position: absolute; right: 4px; top: 3px; width: 20px; height: 20px; border-radius: 50%; background: #8e44ad; color: #e8c8f0; font-size: 11px; font-weight: 400; line-height: 20px; text-align: center; }
.tray { display: flex; align-items: center; margin-left: auto; padding-right: 24px; color: #f2f2f2; }
.tr-up { width: 14px; height: 8px; }
.tr-cloud { width: 22px; height: 20px; margin-left: 20px; }
.tr-lang { width: 44px; margin-left: 17.500px; text-align: center; font-size: 14px; line-height: 20px; }
.tr-wifi { width: 22px; height: 18px; margin-left: 13.500px; }
.tr-vol { width: 20px; height: 18px; margin-left: 9.500px; }
.tr-bat { width: 22px; height: 18px; margin-left: 8.500px; }
.tr-time { width: 84px; margin-left: 13px; text-align: right; font-size: 15px; line-height: 20px; white-space: nowrap; }
```
